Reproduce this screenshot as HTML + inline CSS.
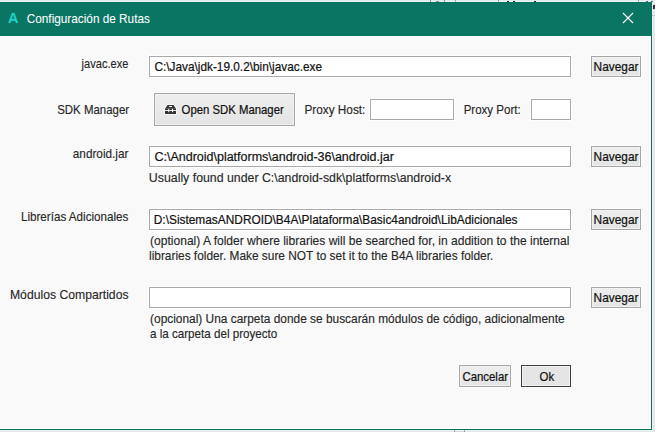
<!DOCTYPE html>
<html><head><meta charset="utf-8">
<style>
*{margin:0;padding:0;box-sizing:border-box}
html,body{width:655px;height:432px;overflow:hidden;background:#dfe9e7;font-family:"Liberation Sans",sans-serif}
.a{position:absolute}
.t{position:absolute;white-space:pre;font-size:12px;line-height:14px;transform-origin:0 0;-webkit-text-stroke:0.2px currentColor}
.f{position:absolute;background:#fff;border:1px solid #a9a9a9;box-shadow:0 0 0 1px #fff}
.b{position:absolute;background:linear-gradient(#eeeeee,#e4e4e4);border:1px solid #a6a6a6;box-shadow:0 0 0 1px #fff,inset 0 0 0 1px #f1f1f1}
</style></head><body>

<div class="a" style="left:0;top:0;width:655px;height:1px;background:#e0ebe9"></div>
<div class="a" style="left:0;top:1px;width:655px;height:1px;background:#eef4f3"></div>
<div class="a" style="left:652px;top:2px;width:1px;height:429px;background:#ebf2f0"></div>
<div class="a" style="left:652px;top:15px;width:3px;height:1px;background:#c5cccb"></div>
<div class="a" style="left:0;top:430px;width:653px;height:1px;background:#ebf2f0"></div>
<div class="a" style="left:430px;top:0;width:1px;height:2px;background:#8a8f8e"></div>
<div class="a" style="left:436px;top:1px;width:3px;height:1px;background:#8a8f8e"></div>
<div class="a" style="left:444px;top:0;width:1px;height:2px;background:#8a8f8e"></div>
<div class="a" style="left:455px;top:0;width:1px;height:2px;background:#a5abaa"></div>
<div class="a" style="left:498px;top:0;width:1px;height:2px;background:#a5abaa"></div>
<div class="a" style="left:507px;top:1px;width:2px;height:1px;background:#2a2040"></div>
<div class="a" style="left:513px;top:1px;width:2px;height:1px;background:#2a2040"></div>
<div class="a" style="left:534px;top:1px;width:2px;height:1px;background:#2a2040"></div>
<div class="a" style="left:653px;top:5px;width:2px;height:4px;background:#3a2a40"></div>
<div class="a" style="left:454px;top:430px;width:1px;height:2px;background:#9aa3a1"></div>
<div class="a" style="left:464px;top:430px;width:1px;height:2px;background:#9aa3a1"></div>
<div class="a" style="left:455px;top:431px;width:9px;height:1px;background:#d3dbd9"></div>
<div class="a" style="left:638px;top:0;width:1px;height:2px;background:#a5abaa"></div>
<div class="a" style="left:646px;top:1px;width:2px;height:1px;background:#5a6a8a"></div>
<div class="a" style="left:651px;top:1px;width:2px;height:1px;background:#4a6aa0"></div>
<div class="a" style="left:0;top:2px;width:652px;height:428px;background:#07705f"></div>
<div class="a" style="left:0;top:3px;width:651px;height:33px;background:#0b7564"></div>
<div class="a" style="left:0;top:36px;width:651px;height:393px;background:#fff"></div>
<div class="a" style="left:0;top:37px;width:650px;height:391px;background:#f9f9f9"></div>
<div class="t" style="left:8px;top:10px;font-size:14.5px;line-height:16px;font-weight:bold;color:#1fd3c5;-webkit-text-stroke:0">A</div>
<svg class="a" style="left:622px;top:12px" width="12" height="12" viewBox="0 0 12 12"><path d="M1 1L11 11M11 1L1 11" stroke="#fff" stroke-width="1.1" fill="none"/></svg>
<div class="f" style="left:149px;top:56px;width:422px;height:21px"></div>
<div class="b" style="left:591px;top:56px;width:50px;height:21px"></div>
<div class="b" style="left:154px;top:93px;width:141px;height:33px"></div>
<svg class="a" style="left:163px;top:103px" width="15" height="13" viewBox="-1 -1 15 13"><g fill="#fff" stroke="#fff" stroke-width="1.4" opacity="0.85"><path d="M3.6 1H9.4L11.9 4.4H1.1Z"/><rect x="1" y="4.4" width="11" height="5.6"/></g><g fill="#333"><path d="M3.6 1H9.4L11.9 4.4H1.1Z M5 2V3H8V2Z" fill-rule="evenodd"/><rect x="1" y="4.4" width="11" height="1.7"/><rect x="1" y="7" width="11" height="3"/></g><rect x="4.2" y="4.8" width="1" height="3.4" fill="#fff"/><rect x="8.0" y="4.8" width="1" height="3.4" fill="#fff"/></svg>
<div class="f" style="left:370px;top:99px;width:84px;height:21px"></div>
<div class="f" style="left:531px;top:99px;width:40px;height:21px"></div>
<div class="f" style="left:149px;top:146px;width:422px;height:21px"></div>
<div class="b" style="left:591px;top:146px;width:50px;height:21px"></div>
<div class="f" style="left:149px;top:209px;width:422px;height:21px"></div>
<div class="b" style="left:591px;top:209px;width:50px;height:21px"></div>
<div class="f" style="left:149px;top:287px;width:422px;height:21px"></div>
<div class="b" style="left:591px;top:287px;width:50px;height:21px"></div>
<div class="b" style="left:459px;top:365px;width:52px;height:22px"></div>
<div class="b" style="left:521px;top:365px;width:50px;height:22px;border-color:#3d3d3d;background:#e5e5e5;box-shadow:0 0 0 1px #fff,inset 0 0 0 1px #f1f1f1"></div>

<div class="t" style="left:26.75px;top:11.28px;color:#ffffff;font-size:11.794px;transform:scaleY(1.08);-webkit-text-stroke:0.05px #fff">Configuración de Rutas</div>
<div class="t" style="left:81.62px;top:56.05px;color:#262626;font-size:11.077px;transform:scaleY(1.08);-webkit-text-stroke:0.12px #262626">javac.exe</div>
<div class="t" style="left:154.40px;top:59.26px;color:#111111;font-size:11.831px;transform:scaleY(1.08);">C:\Java\jdk-19.0.2\bin\javac.exe</div>
<div class="t" style="left:593.61px;top:59.25px;color:#111111;font-size:11.864px;transform:scaleY(1.08);">Navegar</div>
<div class="t" style="left:57.14px;top:102.39px;color:#262626;font-size:11.481px;transform:scaleY(1.08);-webkit-text-stroke:0.12px #262626">SDK Manager</div>
<div class="t" style="left:181.60px;top:102.44px;color:#111111;font-size:11.356px;transform:scaleY(1.08);">Open SDK Manager</div>
<div class="t" style="left:304.42px;top:102.27px;color:#262626;font-size:11.800px;transform:scaleY(1.08);-webkit-text-stroke:0.12px #262626">Proxy Host:</div>
<div class="t" style="left:463.64px;top:102.37px;color:#262626;font-size:11.545px;transform:scaleY(1.08);-webkit-text-stroke:0.12px #262626">Proxy Port:</div>
<div class="t" style="left:72.80px;top:146.28px;color:#262626;font-size:11.789px;transform:scaleY(1.08);-webkit-text-stroke:0.12px #262626">android.jar</div>
<div class="t" style="left:154.50px;top:149.01px;color:#111111;font-size:12.496px;transform:scaleY(1.08);">C:\Android\platforms\android-36\android.jar</div>
<div class="t" style="left:148.87px;top:170.08px;color:#262626;font-size:12.332px;transform:scaleY(1.08);-webkit-text-stroke:0.12px #262626">Usually found under C:\android-sdk\platforms\android-x</div>
<div class="t" style="left:20.93px;top:209.33px;color:#262626;font-size:11.651px;transform:scaleY(1.08);-webkit-text-stroke:0.12px #262626">Librerías Adicionales</div>
<div class="t" style="left:153.81px;top:212.24px;color:#111111;font-size:11.889px;transform:scaleY(1.08);">D:\SistemasANDROID\B4A\Plataforma\Basic4android\LibAdicionales</div>
<div class="t" style="left:593.61px;top:149.25px;color:#111111;font-size:11.864px;transform:scaleY(1.08);">Navegar</div>
<div class="t" style="left:593.61px;top:212.25px;color:#111111;font-size:11.864px;transform:scaleY(1.08);">Navegar</div>
<div class="t" style="left:150.10px;top:233.18px;color:#262626;font-size:12.040px;transform:scaleY(1.08);-webkit-text-stroke:0.12px #262626">(optional) A folder where libraries will be searched for, in addition to the internal</div>
<div class="t" style="left:149.01px;top:248.24px;color:#262626;font-size:11.882px;transform:scaleY(1.08);-webkit-text-stroke:0.12px #262626">libraries folder. Make sure NOT to set it to the B4A libraries folder.</div>
<div class="t" style="left:9.98px;top:287.13px;color:#262626;font-size:12.197px;transform:scaleY(1.08);-webkit-text-stroke:0.12px #262626">Módulos Compartidos</div>
<div class="t" style="left:593.61px;top:290.26px;color:#111111;font-size:11.836px;transform:scaleY(1.08);">Navegar</div>
<div class="t" style="left:150.10px;top:311.24px;color:#262626;font-size:11.902px;transform:scaleY(1.08);-webkit-text-stroke:0.12px #262626">(opcional) Una carpeta donde se buscarán módulos de código, adicionalmente</div>
<div class="t" style="left:150.00px;top:326.33px;color:#262626;font-size:11.643px;transform:scaleY(1.08);-webkit-text-stroke:0.12px #262626">a la carpeta del proyecto</div>
<div class="t" style="left:462.40px;top:369.42px;color:#111111;font-size:11.425px;transform:scaleY(1.08);">Cancelar</div>
<div class="t" style="left:539.60px;top:369.41px;color:#111111;font-size:11.440px;transform:scaleY(1.08);">Ok</div>
</body></html>
